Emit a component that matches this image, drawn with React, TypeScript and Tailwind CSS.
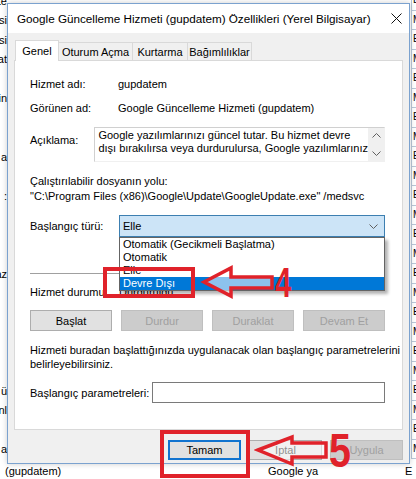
import React from "react";

const leftRows = ["te", "si", "si", "at", "", "in", "", "", "a", "", ":", "", "", "", "az", "", "", "", "", "", "ü", "nl", "", "a"];

function Chevron({ up = false }: { up?: boolean }) {
  return (
    <svg width="9" height="5" viewBox="0 0 9 5" className="block">
      <polyline
        points={up ? "0.5,4.5 4.5,0.5 8.5,4.5" : "0.5,0.5 4.5,4.5 8.5,0.5"}
        fill="none"
        stroke="#606060"
        strokeWidth="1"
      />
    </svg>
  );
}

function Background() {
  return (
    <div className="grid auto-rows-[19.5px] -mt-[9px] text-[11px] leading-[14px] text-black">
      {leftRows.map((t, i) => (
        <div key={i} className="flex items-center">
          <div className="w-[7px] overflow-hidden flex justify-end whitespace-nowrap">{t}</div>
          <div className="flex-1" />
          <div className="w-[5px] self-stretch border-l border-b border-[#b9c7d8] pl-[1px] flex items-center overflow-hidden text-[10px]">
            {i % 2 === 0 ? "E" : "M"}
          </div>
        </div>
      ))}
      <div className="flex items-center pl-[5px] pt-[4px]">
        <span className="w-[263px] whitespace-nowrap">(gupdatem)</span>
        <span className="flex-1 whitespace-nowrap">Google ya</span>
        <span className="w-[11px]">E</span>
      </div>
    </div>
  );
}

function Btn({ children, disabled = false }: { children: React.ReactNode; disabled?: boolean }) {
  return (
    <div
      className={
        disabled
          ? "h-full border border-[#bfbfbf] bg-[#cccccc] text-[#a0a0a0] flex items-center justify-center"
          : "h-full border border-[#adadad] bg-[#e1e1e1] text-black flex items-center justify-center"
      }
    >
      {children}
    </div>
  );
}

function Arrow({ w, h, points }: { w: number; h: number; points: string }) {
  return (
    <svg width={w} height={h} viewBox={`0 0 ${w} ${h}`} className="block">
      <polygon
        points={points}
        fill="rgba(255,255,255,0.55)"
        stroke="#e0222a"
        strokeWidth="3.5"
        strokeLinejoin="miter"
      />
    </svg>
  );
}

export default function App() {
  return (
    <div className="relative w-[416px] h-[479px] overflow-hidden bg-white font-['Liberation_Sans',Arial,sans-serif] text-[11px] leading-[14px] text-black">
      <Background />

      {/* Dialog window */}
      <div className="absolute left-[7px] top-[3px] w-[403px] h-[461px] border border-[#7ba2cf] bg-[#f0f0f0] flex flex-col shadow-[0_0_6px_rgba(0,0,0,0.2)]">
        <div className="h-[29px] shrink-0 bg-white flex items-center justify-between pl-[9px] pr-[7px]">
          <span className="text-[11.7px] whitespace-nowrap">
            Google Güncelleme Hizmeti (gupdatem) Özellikleri (Yerel Bilgisayar)
          </span>
          <svg width="11" height="11" viewBox="0 0 11 11" className="block">
            <line x1="0.5" y1="0.5" x2="10.5" y2="10.5" stroke="#111" strokeWidth="1" />
            <line x1="10.5" y1="0.5" x2="0.5" y2="10.5" stroke="#111" strokeWidth="1" />
          </svg>
        </div>

        <div className="flex-1 flex flex-col px-[6px] pt-[7px]">
          {/* Tabs */}
          <div className="h-[20px] flex items-end pl-[1px]">
            <div className="relative z-10 h-[21px] -mb-[1px] w-[44px] bg-white border border-b-0 border-[#d9d9d9] flex items-center justify-center pb-[1px]">
              Genel
            </div>
            <div className="h-[18px] w-[74px] border border-l-0 border-b-0 border-[#d9d9d9] flex items-center justify-center">
              Oturum Açma
            </div>
            <div className="h-[18px] w-[55px] border border-l-0 border-b-0 border-[#d9d9d9] flex items-center justify-center">
              Kurtarma
            </div>
            <div className="h-[18px] w-[64px] border border-l-0 border-b-0 border-[#d9d9d9] flex items-center justify-center">
              Bağımlılıklar
            </div>
          </div>

          {/* Panel */}
          <div className="h-[370px] shrink-0 bg-white border border-[#d9d9d9] pl-[15px] pr-[17px] pt-[16px] flex flex-col">
            <div className="flex h-[14px]">
              <div className="w-[88px]">Hizmet adı:</div>
              <div>gupdatem</div>
            </div>
            <div className="flex h-[14px] mt-[10px]">
              <div className="w-[88px]">Görünen ad:</div>
              <div className="whitespace-nowrap">Google Güncelleme Hizmeti (gupdatem)</div>
            </div>
            <div className="flex mt-[12px]">
              <div className="w-[88px] pt-[6px]">Açıklama:</div>
              <div className="flex-1 h-[35px] border border-[#d0d0d0] border-r-[#f0f0f0] border-b-[#f0f0f0] bg-white flex">
                <div className="flex-1 pl-[3px] pt-[1px] leading-[13px] overflow-hidden whitespace-nowrap">
                  <div>Google yazılımlarınızı güncel tutar. Bu hizmet devre</div>
                  <div>dışı bırakılırsa veya durdurulursa, Google yazılımlarınız</div>
                </div>
                <div className="w-[16px] bg-[#f0f0f0] flex flex-col items-center justify-between py-[5px]">
                  <Chevron up />
                  <Chevron />
                </div>
              </div>
            </div>
            <div className="mt-[12px] leading-[15px]">Çalıştırılabilir dosyanın yolu:</div>
            <div className="leading-[15px] whitespace-nowrap">
              "C:\Program Files (x86)\Google\Update\GoogleUpdate.exe" /medsvc
            </div>
            <div className="flex mt-[11px] h-[22px]">
              <div className="w-[89px] flex items-center">Başlangıç türü:</div>
              <div className="flex-1 border border-[#3c7fb1] bg-[#cce4f7] flex items-center justify-between pl-[3px] pr-[6px]">
                <span>Elle</span>
                <Chevron />
              </div>
            </div>
            <div className="mt-[36px] border-t border-t-[#a0a0a0] border-b border-b-white" />
            <div className="flex mt-[10px] h-[14px]">
              <div className="w-[89px]">Hizmet durumu:</div>
              <div>Durduruldu</div>
            </div>
            <div className="mt-[11px] h-[21px] grid grid-cols-4 gap-x-[9px]">
              <Btn>Başlat</Btn>
              <Btn disabled>Durdur</Btn>
              <Btn disabled>Duraklat</Btn>
              <Btn disabled>Devam Et</Btn>
            </div>
            <div className="mt-[12px] leading-[14px]">
              <div className="whitespace-nowrap">
                Hizmeti buradan başlattığınızda uygulanacak olan başlangıç parametrelerini
              </div>
              <div>belirleyebilirsiniz.</div>
            </div>
            <div className="flex mt-[11px] h-[21px]">
              <div className="w-[122px] flex items-center whitespace-nowrap">Başlangıç parametreleri:</div>
              <div className="flex-1 border border-[#7a7a7a] bg-white" />
            </div>
          </div>

          {/* Bottom buttons */}
          <div className="mt-[10px] h-[20px] flex justify-end gap-[8px]">
            <div className="w-[73px] h-full border-2 border-[#1173cf] bg-[#e1e1e1] flex items-center justify-center">
              Tamam
            </div>
            <div className="w-[73px] h-full">
              <Btn>İptal</Btn>
            </div>
            <div className="w-[73px] h-full">
              <Btn disabled>Uygula</Btn>
            </div>
          </div>
        </div>
      </div>

      {/* Open dropdown list */}
      <div className="absolute left-[119px] top-[237px] w-[266px] border border-[#646464] bg-white leading-[13px] shadow-[3px_3px_3px_rgba(0,0,0,0.3)]">
        <div className="h-[13px] pl-[3px] whitespace-nowrap">Otomatik (Gecikmeli Başlatma)</div>
        <div className="h-[13px] pl-[3px]">Otomatik</div>
        <div className="h-[13px] pl-[3px]">Elle</div>
        <div className="h-[13px] pl-[3px] bg-[#0078d7] text-white">Devre Dışı</div>
      </div>

      {/* Annotation 4 */}
      <div className="absolute left-[103px] top-[267px] w-[92px] h-[31px] border-4 border-[#e0222a]" />
      <div className="absolute left-[200px] top-[264px]">
        <Arrow w={76} h={36} points="4,18 31,4 31,13 72,13 72,24 31,24 31,32" />
      </div>
      <div className="absolute left-[275px] top-[261px] text-[43px] leading-[43px] font-bold text-[#e0222a] scale-x-[0.68] origin-left">
        4
      </div>

      {/* Annotation 5 */}
      <div className="absolute left-[160px] top-[430px] w-[90px] h-[48px] border-4 border-[#e0222a]" />
      <div className="absolute left-[254px] top-[433px]">
        <Arrow w={76} h={36} points="4,17 38,4 38,10 72,10 72,24 38,24 38,31" />
      </div>
      <div className="absolute left-[329px] top-[427px] text-[48px] leading-[48px] font-bold text-[#e0222a] scale-x-[0.82] origin-left">
        5
      </div>
    </div>
  );
}
